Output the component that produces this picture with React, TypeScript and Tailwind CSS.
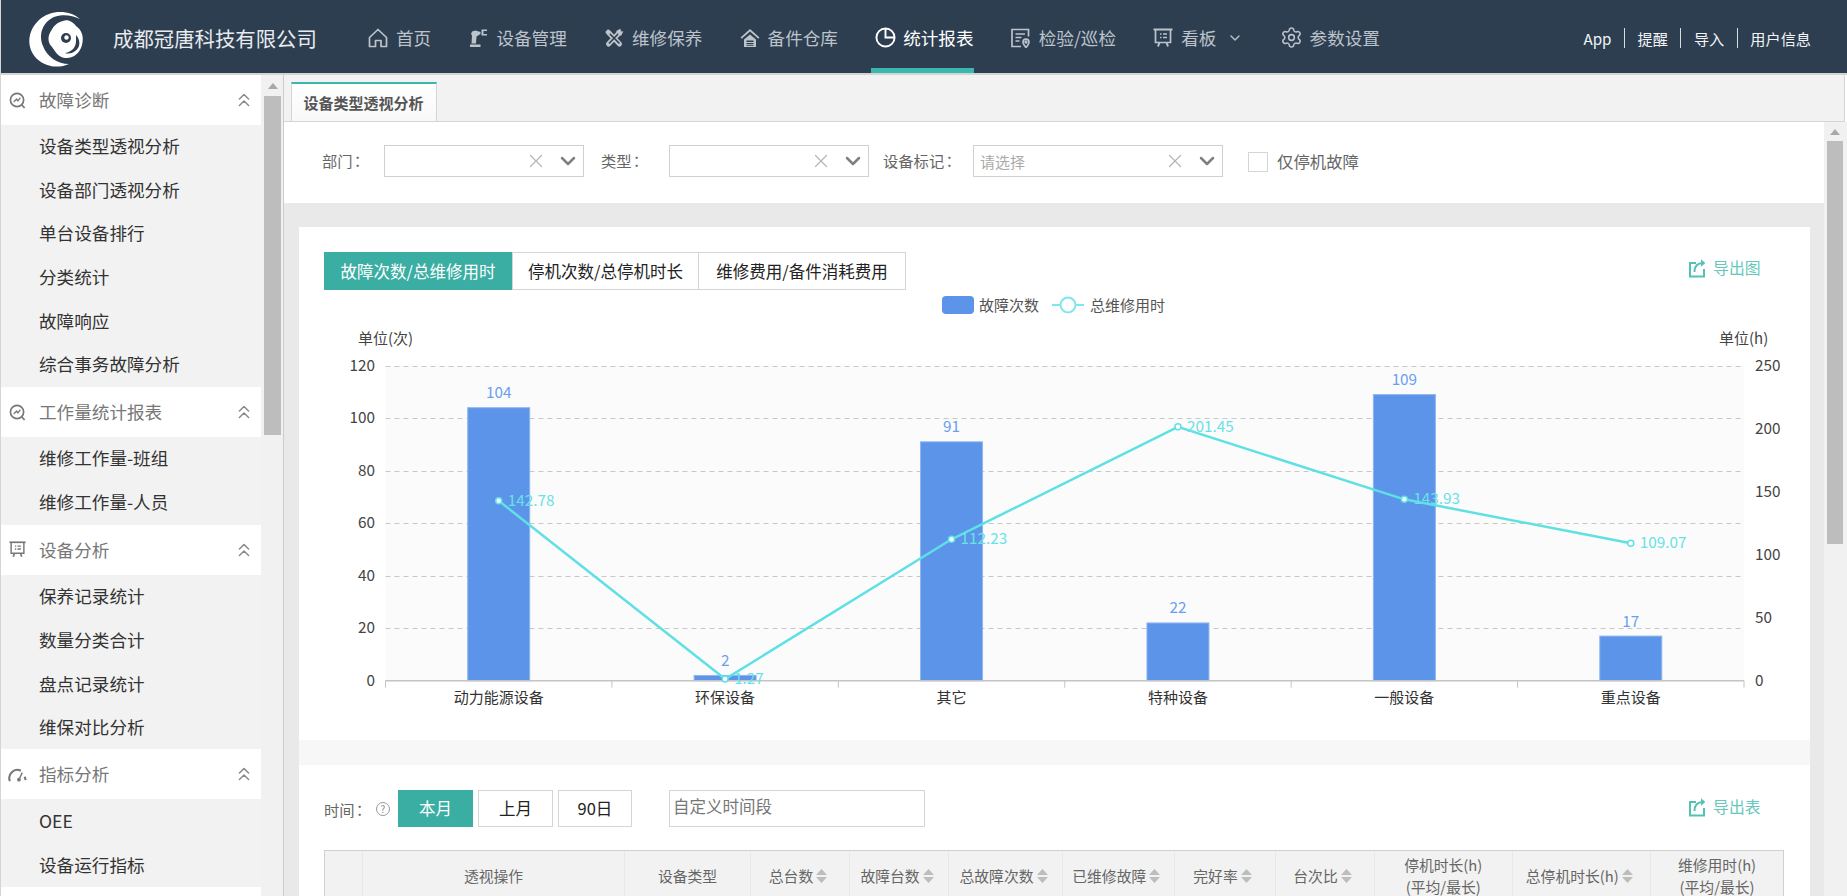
import React from "react";
import { Settings, ChevronDown, X, ChevronsUp } from "lucide-react";

function Logo() {
  return (
    <svg viewBox="0 0 75 65" className="w-[75px] h-[65px] shrink-0 ml-[19px]">
      <path fill="#fff" d="M60 15C50 6 31 5 19 16C7 27 6 44 17 55C27 64 40 64 49 60C38 60 27 53 23 42C18 30 23 18 34 13C42 10 52 11 60 15Z" />
      <path fill="#fff" d="M43 17C48 15 53 18 56 22C62 26 64 33 62 41C60 49 53 55 45 54C38 53 35 47 32 43C27 38 28 31 31 27C34 21 38 18 43 17Z" />
      <path fill="#2e3e51" d="M56 37C56 43 52 48 45 49C51 51 57 47 59 42C60 38 59 34 56 31C56 33 56 35 56 37Z" />
      <circle cx="46" cy="34" r="5" fill="#2e3e51" />
      <circle cx="46.500" cy="33.500" r="2.200" fill="#fff" />
    </svg>
  );
}

const ic = "w-5 h-5 shrink-0";
const s = { fill: "none", stroke: "currentColor", strokeWidth: 1.7 } as const;

function HomeIcon() {
  return (
    <svg viewBox="0 0 20 20" className={ic} {...s}>
      <path d="M1.500 9.500 10 1.500l8.500 8V18.500h-5.500v-6H7.500v6H1.500Z" strokeLinejoin="round" />
    </svg>
  );
}
function RobotIcon() {
  return (
    <svg viewBox="0 0 20 20" className={ic} fill="currentColor">
      <path d="M2 16.500h10.500V19H2zM3.500 15.500 4 7.500 3 6l1-2.500 3.500-1 5 1.500V6l-4 2.500-.5 7z" />
      <path d="M13.500 1.500H19V3h-3.500v3H19v1.500h-5.500z" />
    </svg>
  );
}
function ToolsIcon() {
  return (
    <svg viewBox="0 0 20 20" className={ic} fill="none" stroke="currentColor">
      <path d="M4.500 4.500 15.500 16M15.500 4.500 4.500 16" strokeWidth={5} strokeLinecap="round" />
      <path d="M5 5 15.500 15.500M15 5 5 15.500" strokeWidth={1.600} stroke="#2e3e51" />
      <path d="M1.500 4 4 1.500l3 3L4.500 7ZM12.500 3 16.500 1l-1 2 1.500 1.500 2-1-2 4-2-.5Z" fill="currentColor" strokeWidth={0.500} />
    </svg>
  );
}
function WarehouseIcon() {
  return (
    <svg viewBox="0 0 20 20" className={ic} fill="currentColor">
      <path d="M10 1 0.500 9.500l1.200 1.300L10 3.500l8.300 7.300 1.200-1.300Z" />
      <path d="M4 11.500 10 6.500l6 5V19H4Zm2.500 1V14h7v-1.500Zm0 2.500v1.300h7V15Zm0 2.200V18h7v-.8Z" fillRule="evenodd" />
    </svg>
  );
}
function PieIcon() {
  return (
    <svg viewBox="0 0 22 22" className="w-[21px] h-[21px] shrink-0 -mr-[1px]" fill="none" stroke="currentColor" strokeWidth={2}>
      <circle cx="11" cy="11" r="9.500" />
      <path d="M11 1.500V11h9.500" />
    </svg>
  );
}
function InspectIcon() {
  return (
    <svg viewBox="0 0 20 20" className={ic} {...s}>
      <path d="M10 18.500H1V1.500h16.500v7" />
      <path d="M4.500 6h9.500M4.500 9.500h6M4.500 13h4" />
      <path d="M15 19.500c-2-2.500-3-4-3-5.300a3 3 0 0 1 6 0c0 1.300-1 2.800-3 5.300Z" />
      <circle cx="15" cy="14" r=".8" />
    </svg>
  );
}
function BoardIcon({ className = ic }: { className?: string }) {
  return (
    <svg viewBox="0 0 20 20" className={className} {...s}>
      <path d="M0.500 1.500h19" strokeWidth={2} />
      <path d="M2.500 2v12.500h15V2" />
      <path d="M7 6h1.500M10 6h4M7 9.500h1.500M10 9.500h4" />
      <path d="M6.500 14.500 5 18.500M13.500 14.500 15 18.500" strokeWidth={2} />
    </svg>
  );
}
function GaugeIcon() {
  return (
    <svg viewBox="0 0 20 18" className="w-[19px] h-[17px] shrink-0" fill="none" stroke="currentColor" strokeWidth={2.200}>
      <path d="M2 16A8.500 8.500 0 0 1 13.500 5" />
      <path d="M18.500 15a8 8 0 0 0-1-3.500" />
      <circle cx="11.500" cy="14.500" r="2" fill="currentColor" stroke="none" />
      <path d="M11.500 14.500 15 7" strokeWidth={1.500} />
    </svg>
  );
}
function SearchChart() {
  return (
    <svg viewBox="0 0 18 18" className="w-[17px] h-[17px] shrink-0" {...s} strokeWidth={1.8}>
      <circle cx="8.500" cy="8.500" r="7" />
      <path d="M13.500 13.500 16.500 17" />
      <path d="M5 10.500 8 7.500l1.500 2L12 6" strokeWidth={1.400} />
    </svg>
  );
}
function ExportIcon() {
  return (
    <svg viewBox="0 0 18 20" className="w-[18px] h-[20px] shrink-0" fill="none" stroke="#54c1b5" strokeWidth={2}>
      <path d="M8 5H2v13.500h14V11" />
      <path d="M6.500 14C6.500 8 9 5 15 5" />
      <path d="M13 1.500 17 5l-4 3.500" fill="#54c1b5" strokeWidth={0.500} />
    </svg>
  );
}
function Caret() {
  return (
    <svg viewBox="0 0 11 14" className="w-[11px] h-[14px] shrink-0" fill="#bdbdbd">
      <path d="M5.500 0 11 6H0Z" />
      <path d="M5.500 14 0 8h11Z" />
    </svg>
  );
}
function UpArrow() {
  return (
    <svg viewBox="0 0 10 6" className="w-[10px] h-[6px]" fill="#a8a8a8">
      <path d="M5 0 10 6H0Z" />
    </svg>
  );
}
function Colon() {
  return <span className="-ml-[2.500px] font-['Noto_Sans_CJK_TC',sans-serif]">：</span>;
}

const nav: { t: string; i: React.ReactNode; active?: boolean; caret?: boolean }[] = [
  { t: "首页", i: <HomeIcon /> },
  { t: "设备管理", i: <RobotIcon /> },
  { t: "维修保养", i: <ToolsIcon /> },
  { t: "备件仓库", i: <WarehouseIcon /> },
  { t: "统计报表", i: <PieIcon />, active: true },
  { t: "检验/巡检", i: <InspectIcon /> },
  { t: "看板", i: <BoardIcon />, caret: true },
  { t: "参数设置", i: <Settings className="w-[23px] h-[23px] shrink-0 -mx-[1.500px]" strokeWidth={1.600} /> },
];

const menu: { t: string; icon: React.ReactNode; items: string[] }[] = [
  { t: "故障诊断", icon: <SearchChart />, items: ["设备类型透视分析", "设备部门透视分析", "单台设备排行", "分类统计", "故障响应", "综合事务故障分析"] },
  { t: "工作量统计报表", icon: <SearchChart />, items: ["维修工作量-班组", "维修工作量-人员"] },
  { t: "设备分析", icon: <BoardIcon className="w-[17px] h-[17px] shrink-0" />, items: ["保养记录统计", "数量分类合计", "盘点记录统计", "维保对比分析"] },
  { t: "指标分析", icon: <GaugeIcon />, items: ["OEE", "设备运行指标"] },
];

function SelectBox({ w, placeholder }: { w: string; placeholder?: string }) {
  return (
    <div className={"flex items-center h-[32px] border border-[#d0d0d0] bg-white pl-[6px] pr-[3px] " + w}>
      <span className="flex-1 text-[15px] leading-[30px] text-[#aaaaaa] pt-[1px]">{placeholder}</span>
      <X className="w-[22px] h-[22px] text-[#b5b5b5] mr-[9px]" strokeWidth={1.300} />
      <ChevronDown className="w-[24px] h-[24px] text-[#808080]" strokeWidth={2.500} />
    </div>
  );
}

const cols: { t: React.ReactNode; sort?: boolean }[] = [
  { t: "" },
  { t: "透视操作" },
  { t: "设备类型" },
  { t: "总台数", sort: true },
  { t: "故障台数", sort: true },
  { t: "总故障次数", sort: true },
  { t: "已维修故障", sort: true },
  { t: "完好率", sort: true },
  { t: "台次比", sort: true },
  { t: <>停机时长(h)<br />(平均/最长)</> },
  { t: "总停机时长(h)", sort: true },
  { t: <>维修用时(h)<br />(平均/最长)</> },
];

const X0 = 299;
const Y0 = 290;
const left = 385.5;
const right = 1744;
const base = 680.7;
const catW = (right - left) / 6;
const data = [
  { c: "动力能源设备", n: 104, h: 142.78 },
  { c: "环保设备", n: 2, h: 1.27 },
  { c: "其它", n: 91, h: 112.23 },
  { c: "特种设备", n: 22, h: 201.45 },
  { c: "一般设备", n: 109, h: 143.93 },
  { c: "重点设备", n: 17, h: 109.07 },
];
const cx = (i: number) => left + catW * (i + 0.5) - X0;
const yN = (v: number) => base - (v / 120) * 315 - Y0;
const yH = (v: number) => base - (v / 250) * 315 - Y0;

function Chart() {
  const b = base - Y0;
  const pts = data.map((d, i) => `${cx(i)},${yH(d.h)}`).join(" ");
  const L = left - X0;
  const R = right - X0;
  return (
    <svg width="1511" height="450" viewBox="0 0 1511 450" className="block">
      <rect x="643" y="6" width="32" height="18" rx="4" fill="#5b94e9" />
      <text x="680" y="14.500" fontSize="15" fill="#555" dominantBaseline="central">故障次数</text>
      <line x1="753" x2="785" y1="15" y2="15" stroke="#7fe6e9" strokeWidth="2" />
      <circle cx="769" cy="15" r="7.500" fill="#fff" stroke="#7fe6e9" strokeWidth="2" />
      <text x="791" y="14.500" fontSize="15" fill="#555" dominantBaseline="central">总维修用时</text>
      <text x="59" y="47" fontSize="15" fill="#444" dominantBaseline="central">单位(次)</text>
      <text x="1420" y="47" fontSize="15" fill="#444" dominantBaseline="central">单位(h)</text>
      <rect x={L} y={yN(120)} width={R - L} height={315} fill="#fbfbfb" />
      {[0, 20, 40, 60, 80, 100, 120].map((v) => (
        <g key={v}>
          {v > 0 && <line x1={L} x2={R} y1={Math.round(yN(v)) + 0.5} y2={Math.round(yN(v)) + 0.5} stroke="#c8c8c8" strokeDasharray="5 4" />}
          <text x={76} y={yN(v) - 2} fontSize="15.300" fill="#444" textAnchor="end" dominantBaseline="central">{v}</text>
        </g>
      ))}
      {[0, 50, 100, 150, 200, 250].map((v) => (
        <text key={v} x={1456} y={yH(v) - 2} fontSize="15.300" fill="#444" dominantBaseline="central">{v}</text>
      ))}
      {data.map((d, i) => (
        <g key={d.c}>
          <rect x={cx(i) - 31} y={yN(d.n)} width={62} height={b - yN(d.n)} fill="#5b94e9" stroke="#8fb6f0" strokeWidth="1" />
          <text x={cx(i)} y={yN(d.n) - 16.500} fontSize="15.300" fill="#6a9ff0" textAnchor="middle" dominantBaseline="central">{d.n}</text>
          <text x={cx(i)} y={406} fontSize="15" fill="#333" textAnchor="middle" dominantBaseline="central">{d.c}</text>
        </g>
      ))}
      <line x1={L} x2={R} y1={b} y2={b} stroke="#c4c4c4" strokeWidth="1.500" />
      {[0, 1, 2, 3, 4, 5, 6].map((i) => (
        <line key={i} x1={L + catW * i} x2={L + catW * i} y1={b} y2={b + 7} stroke="#c4c4c4" />
      ))}
      <polyline points={pts} fill="none" stroke="#5fe0e4" strokeWidth="2.500" strokeLinejoin="round" />
      {data.map((d, i) => (
        <g key={d.c + "p"}>
          <circle cx={cx(i)} cy={yH(d.h)} r="3" fill="#fff" stroke="#5fe0e4" strokeWidth="1.500" />
          <text x={cx(i) + 9} y={yH(d.h) - 2} fontSize="15.300" fill="#68e2e6" dominantBaseline="central">{d.h}</text>
        </g>
      ))}
    </svg>
  );
}

export default function App() {
  return (
    <div className="h-[896px] w-full overflow-hidden flex flex-col border-l border-[#d5d5d5] bg-white font-['Noto_Sans_CJK_SC','Liberation_Sans',sans-serif]">
      <header className="h-[73px] shrink-0 bg-[#2e3e51] flex items-center">
        <Logo />
        <div className="ml-[18px] text-[20.400px] leading-[28px] text-[#e8ebee] w-[255px] shrink-0 pt-[3px]">成都冠唐科技有限公司</div>
        <nav className="flex h-full gap-[37.200px] text-[17.600px] leading-[24px]">
          {nav.map((n) => (
            <div
              key={n.t}
              className={
                "flex items-center h-full pt-[7px] border-b-[5px] -ml-[4px] pl-[4px] gap-[8px] " +
                (n.active ? "border-[#38b8ac] text-white" : "border-transparent text-[#bcc3ca]")
              }
            >
              {n.i}
              <span>{n.t}</span>
              {n.caret && <ChevronDown className="w-[16px] h-[16px] ml-[3px] mr-[1px]" strokeWidth={2} />}
            </div>
          ))}
        </nav>
        <div className="ml-auto mr-[36px] flex items-center text-[15.200px] leading-[20px] text-[#f2f4f6] pt-[3px]">
          <span>App</span>
          <span className="w-px h-[20px] bg-[#d8dce0] mx-[12.500px]" />
          <span>提醒</span>
          <span className="w-px h-[20px] bg-[#d8dce0] mx-[12.500px]" />
          <span>导入</span>
          <span className="w-px h-[20px] bg-[#d8dce0] mx-[12.500px]" />
          <span>用户信息</span>
        </div>
      </header>
      <div className="h-[2px] shrink-0 bg-[#d4d4d4]" />
      <div className="flex-1 flex min-h-0">
        <aside className="w-[260px] shrink-0 overflow-hidden bg-white">
          {menu.map((m, gi) => (
            <div key={m.t}>
              <div className="h-[50px] flex items-center text-[#777777] pl-[8px] pr-[6px]">
                <span className="w-[17px] flex justify-center">{m.icon}</span>
                <span className="ml-[13px] flex-1 text-[17.600px] leading-[24px]">{m.t}</span>
                <ChevronsUp className="w-[22px] h-[22px] text-[#888888]" strokeWidth={1.600} />
              </div>
              <div className="bg-[#f2f2f2]">
                {m.items.map((it) => (
                  <div key={it} className={"h-[43.700px] flex items-center pl-[38px] text-[17.600px] leading-[24px] text-[#333333] " + (gi < 2 ? "pb-[2px]" : "")}>{it}</div>
                ))}
              </div>
            </div>
          ))}
        </aside>
        <div className="w-[23px] shrink-0 bg-[#f1f1f1] border-r border-[#cccccc] flex flex-col items-start pl-[3px]">
          <div className="h-[21px] w-[17px] flex items-center justify-center"><UpArrow /></div>
          <div className="w-[17px] h-[339px] bg-[#bdbdbd]" />
        </div>
        <main className="flex-1 min-w-0 flex flex-col">
          <div className="h-[47px] shrink-0 bg-[#f2f2f2] border-b border-[#d5d5d5] border-r mr-[2px] pl-[6.500px] pt-[7px]">
            <div className="w-[146px] h-[39px] bg-gradient-to-b from-white to-[#f8f8f8] border-t-[2px] border-t-[#38b8ac] border-x border-x-[#d5d5d5] flex items-center justify-center text-[15px] leading-[20px] font-semibold text-[#555555]">设备类型透视分析</div>
          </div>
          <div className="flex-1 min-h-0 flex">
            <div className="w-[1540px] shrink-0 overflow-hidden bg-[#e9e9e9]">
              <div className="h-[81px] bg-white flex items-start pt-[23px] pl-[38px] text-[15.300px] leading-[30px] text-[#666666]">
                <span className="w-[62px]">部门<Colon /></span>
                <SelectBox w="w-[200px]" />
                <span className="w-[68px] ml-[17px]">类型<Colon /></span>
                <SelectBox w="w-[200px]" />
                <span className="w-[90px] ml-[14px]">设备标记<Colon /></span>
                <SelectBox w="w-[250px]" placeholder="请选择" />
                <span className="w-[20px] h-[20px] border border-[#d5d5d5] bg-white ml-[25px] mt-[7px]" />
                <span className="ml-[9px] text-[16.400px] leading-[32px]">仅停机故障</span>
              </div>
              <div className="h-[24px]" />
              <div className="ml-[15px] w-[1511px]">
                <div className="h-[513px] bg-white">
                  <div className="h-[63px] pt-[25px] pl-[25px] pr-[49.500px] flex justify-between">
                    <div className="flex text-[16.500px] leading-[38px] h-[38px]">
                      <div className="w-[188px] bg-[#3aaea3] text-white text-center">故障次数/总维修用时</div>
                      <div className="w-[187px] border border-[#d5d5d5] text-center text-[#222222] leading-[36px]">停机次数/总停机时长</div>
                      <div className="w-[207px] border border-[#d5d5d5] border-l-0 text-center text-[#222222] leading-[36px]">维修费用/备件消耗费用</div>
                    </div>
                    <div className="flex items-center gap-[7px] h-[32px] text-[15.800px] leading-[22px] text-[#66c7bb]">
                      <ExportIcon />
                      <span>导出图</span>
                    </div>
                  </div>
                  <Chart />
                </div>
                <div className="h-[25px] bg-[#f7f7f7]" />
                <div className="bg-white h-[200px] px-[25px] pt-[25px]">
                  <div className="flex items-center h-[37px] text-[#666666]">
                    <span className="text-[15.300px] leading-[22px]">时间<Colon /></span>
                    <span className="ml-[8.500px] w-[14px] h-[14px] rounded-full border border-[#999999] text-[10px] leading-[12px] text-center text-[#888888]">?</span>
                    <div className="ml-[8px] w-[75px] h-[37px] bg-[#3aaea3] text-white text-[16.500px] leading-[37px] text-center">本月</div>
                    <div className="ml-[5px] w-[75px] h-[37px] border border-[#d5d5d5] text-[#222222] text-[16.500px] leading-[35px] text-center">上月</div>
                    <div className="ml-[5px] w-[74px] h-[37px] border border-[#d5d5d5] text-[#222222] text-[16.500px] leading-[35px] text-center">90日</div>
                    <div className="ml-[37px] w-[256px] h-[37px] border border-[#d5d5d5] text-[#777777] text-[16.500px] leading-[31px] pl-[3px]">自定义时间段</div>
                    <div className="ml-auto mr-[24.500px] flex items-center gap-[7px] text-[15.800px] leading-[22px] text-[#66c7bb] -mt-[4px]">
                      <ExportIcon />
                      <span>导出表</span>
                    </div>
                  </div>
                  <div className="mt-[23px] w-[1460px] border border-[#d0d0d0] bg-[#f2f2f2] grid grid-cols-[37px_262px_126px_99px_99px_114px_111.500px_101px_99px_138.500px_137.600px_133.900px] text-[14.800px] leading-[22.500px] text-[#666666]">
                    {cols.map((c, i) => (
                      <div key={i} className={"h-[50px] flex items-center justify-center gap-[3px] text-center border-l border-[#e8e8e8] first:border-l-0 " + (c.sort ? "pr-[4px]" : "")}>
                        <span>{c.t}</span>
                        {c.sort && <Caret />}
                      </div>
                    ))}
                  </div>
                </div>
              </div>
            </div>
            <div className="flex-1 bg-[#f1f1f1] flex flex-col pl-[3px]">
              <div className="h-[19px] w-[16px] flex items-center justify-center"><UpArrow /></div>
              <div className="w-[16px] h-[403px] bg-[#bdbdbd]" />
            </div>
          </div>
        </main>
      </div>
    </div>
  );
}
